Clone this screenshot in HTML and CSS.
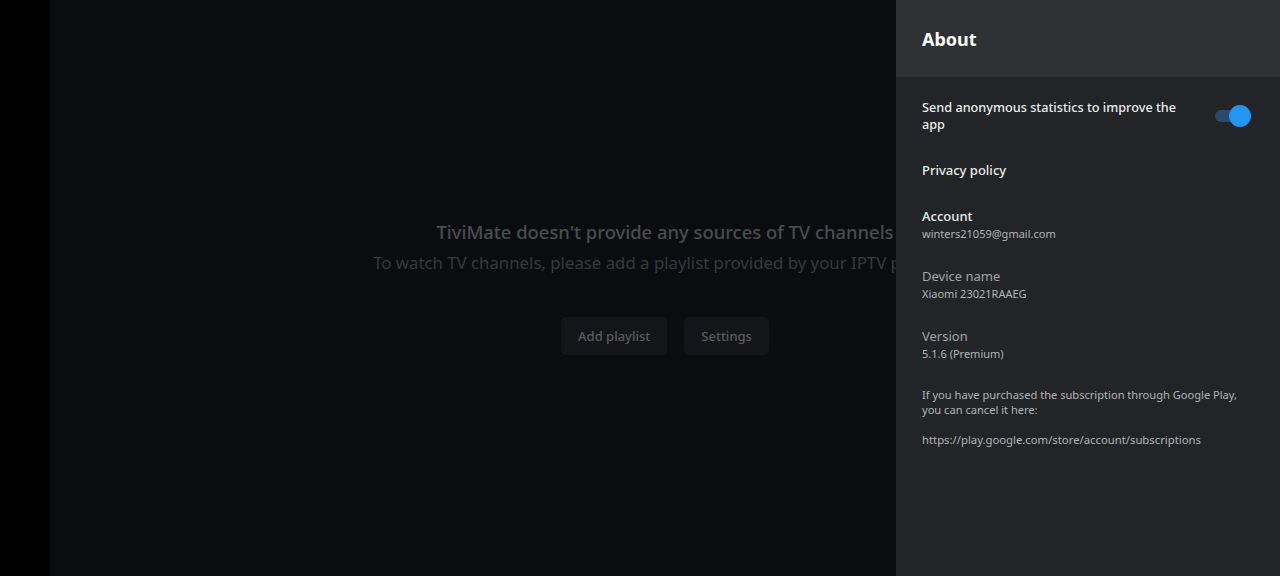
FILE: index.html
```html
<!DOCTYPE html>
<html lang="en">
<head>
    <meta charset="UTF-8">
    <meta name="viewport" content="width=device-width, initial-scale=1.0">
    <title>TiviMate - About</title>
    <link rel="stylesheet" href="styles.css">
</head>
<body>
    <div class="screen">
        <div class="side-strip"></div>

        <!-- main screen, partly covered by the about panel -->
        <div class="main">
            <div class="stage">
                <div class="empty">
                    <h2 class="empty-title">TiviMate doesn't provide any sources of TV channels</h2>
                    <p class="empty-text">To watch TV channels, please add a playlist provided by your IPTV provider</p>
                    <div class="empty-actions">
                        <button class="btn">Add playlist</button>
                        <button class="btn">Settings</button>
                    </div>
                </div>
            </div>
        </div>

        <div class="panel">
            <div class="panel-head">About</div>
            <div class="panel-body">
                <div class="row row-toggle">
                    <div class="label">Send anonymous statistics to improve the app</div>
                    <div class="switch on"><span class="knob"></span></div>
                </div>
                <div class="row row-link">
                    <div class="label">Privacy policy</div>
                </div>
                <div class="row">
                    <div class="label">Account</div>
                    <div class="value">winters21059@gmail.com</div>
                </div>
                <div class="row">
                    <div class="label dim">Device name</div>
                    <div class="value">Xiaomi 23021RAAEG</div>
                </div>
                <div class="row">
                    <div class="label dim">Version</div>
                    <div class="value">5.1.6 (Premium)</div>
                </div>
                <div class="note">
                    <p>If you have purchased the subscription through Google Play, you can cancel it here:</p>
                    <p class="url">https://play.google.com/store/account/subscriptions</p>
                </div>
            </div>
        </div>
    </div>
</body>
</html>
```

FILE: styles.css
```css
html, body {
    margin: 0;
    height: 100%;
    background: #000;
    font-family: "Noto Sans", Roboto, sans-serif;
    overflow: hidden;
}
.screen {
    display: flex;
    height: 576px;
    width: 1280px;
}
.side-strip {
    width: 50px;
    flex-shrink: 0;
    background: #000;
}
.main {
    flex: 1;
    background: #0b0c0f;
    overflow: hidden;
}
/* full width of the screen behind the panel, so the message stays centred on it */
.stage {
    width: 1230px;
    display: flex;
    justify-content: center;
    padding-top: 218px;
}
.empty {
    display: flex;
    flex-direction: column;
    align-items: center;
    white-space: nowrap;
}
.empty-title {
    margin: 0;
    font-size: 18.4px;
    font-weight: 500;
    line-height: 28px;
    color: #4b4c4f;
}
.empty-text {
    margin: 5px 0 0;
    font-size: 16.8px;
    line-height: 24px;
    color: #37393c;
}
.empty-actions {
    display: flex;
    gap: 17px;
    margin-top: 42px;
}
.btn {
    font-family: inherit;
    font-size: 13px;
    font-weight: 500;
    color: #5a5b5e;
    background: #141518;
    border: none;
    border-radius: 5px;
    height: 38px;
    padding: 0 17px;
}

/* about panel */
.panel {
    width: 384px;
    flex-shrink: 0;
    background: #222428;
    display: flex;
    flex-direction: column;
}
.panel-head {
    height: 77px;
    flex-shrink: 0;
    background: #2f3135;
    color: #fff;
    font-size: 18px;
    font-weight: 700;
    line-height: 78px;
    padding-left: 26px;
}
.panel-body {
    padding: 22px 30px 0 26px;
}
.row {
    margin-bottom: 24px;
}
.row-toggle {
    display: flex;
    align-items: center;
    justify-content: space-between;
    margin-bottom: 28px;
}
.row-toggle .label {
    width: 260px;
    font-size: 12.7px;
    line-height: 17px;
}
.row-link {
    margin-bottom: 28px;
}
.label {
    font-size: 13px;
    line-height: 18px;
    color: #ececec;
    font-weight: 500;
}
.label.dim {
    color: #a3a4a6;
    font-weight: 400;
}
.value {
    font-size: 11px;
    line-height: 18px;
    color: #b3b4b6;
}
.switch {
    position: relative;
    width: 30px;
    height: 12px;
    border-radius: 6px;
    background: #2c4a67;
    margin-right: 5px;
}
.knob {
    position: absolute;
    top: -5px;
    right: -6px;
    width: 22px;
    height: 22px;
    border-radius: 50%;
    background: #2196f3;
}
.note {
    font-size: 11.1px;
    line-height: 15px;
    color: #b3b4b6;
}
.note p {
    margin: 0 0 15px;
}
.note .url {
    font-size: 11.3px;
}
```
